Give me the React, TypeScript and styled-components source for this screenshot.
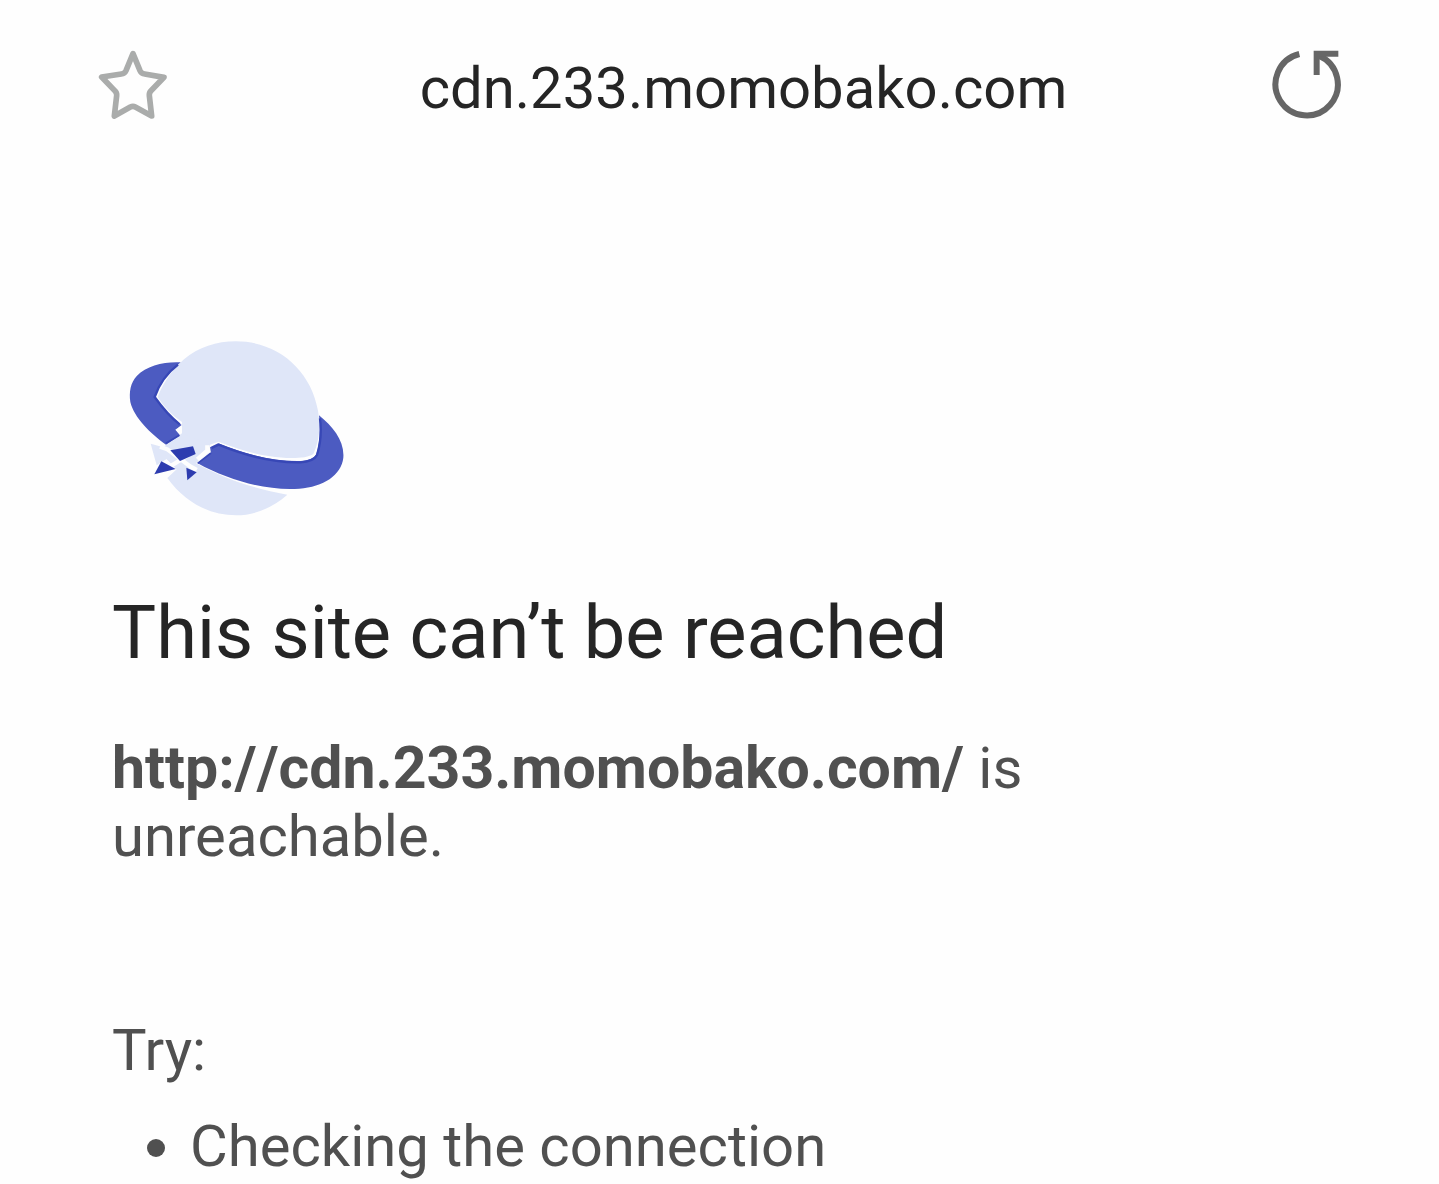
import React from "react";
import styled, { createGlobalStyle } from "styled-components";

const GlobalStyle = createGlobalStyle`
  * { box-sizing: border-box; }
  body {
    margin: 0;
    background: #fefefe;
    font-family: Roboto, "Liberation Sans", sans-serif;
  }
`;

const Toolbar = styled.header`
  display: flex;
  align-items: flex-end;
  padding: 48px 96px 0;
`;

const IconButton = styled.button`
  flex: none;
  width: 74px;
  height: 74px;
  padding: 0;
  border: 0;
  background: none;
  cursor: pointer;

  svg { display: block; }
`;

const Address = styled.div`
  flex: 1;
  min-width: 0;
  padding-left: 48px;
  text-align: center;
  font-size: 58px;
  line-height: 68px;
  color: #252525;
`;

const Content = styled.main`
  padding: 198px 112px 0;
  font-size: 58px;
  line-height: 68px;
  color: #505050;
`;

const Planet = styled.svg`
  display: block;
  width: 248px;
  height: 210px;
`;

const Heading = styled.h1`
  margin: 59px 0 57px;
  font-size: 74px;
  line-height: 88px;
  font-weight: 400;
  color: #252525;
`;

const Message = styled.p`
  max-width: 1000px;
  margin: 0;
`;

const Url = styled.strong`
  font-size: 59px;
  font-weight: 700;
  font-kerning: none;
`;

const Hint = styled.p`
  margin: 146px 0 28px;
`;

const Suggestions = styled.ul`
  margin: 0;
  padding-left: 78px;
`;

function StarIcon() {
  return (
    <svg width="74" height="74" viewBox="48 54 222 222" fill="none" aria-hidden="true">
      <path
        d="M159 71 L180 122 Q184 131 194 132 L252 142 L213 182 Q207 188 208 197 L215 258 L166 231 Q159 227 151 231 L103 258 L110 197 Q111 188 104 182 L65 141 L124 132 Q134 131 138 122 Z"
        stroke="#aaacab"
        strokeWidth="17"
        strokeLinejoin="round"
      />
    </svg>
  );
}

function ReloadIcon() {
  return (
    <svg width="74" height="74" viewBox="57 54 222 222" fill="none" stroke="#666" aria-hidden="true">
      <path d="M148 72 A93.500 93.500 0 1 0 207 77" strokeWidth="18" />
      <path d="M265 71 H200 V135" strokeWidth="18" />
    </svg>
  );
}

function PlanetIllustration() {
  return (
    <Planet viewBox="6 0 744 630" aria-hidden="true">
      <path
        d="M222 118 C265 81 320 64 378 64 C502 64 602 148 624 272 C632 320 628 365 610 402 C590 417 530 417 480 409 C430 402 380 385 325 365 L300 374 L294 399 L258 430 C340 475 430 506 532 524 C488 563 435 586 378 586 C300 586 225 548 172 474 L200 448 L170 417 L140 436 L122 371 L160 382 L216 346 L216 306 C185 285 160 258 143 231 C160 187 188 148 222 118 Z"
        fill="#dfe6f8"
      />
      <path d="M160 382 L216 340 L300 374 L280 400 L200 448 L170 417 Z" fill="#dfe6f8" />
      <path
        d="M212 127 C165 124 110 137 81 167 C61 188 57 216 61 246 C72 292 120 340 168 374 L210 346 L196 329 L215 315 C184 292 156 262 134 231 C151 190 175 158 212 127 Z"
        fill="#4c5bc1"
      />
      <path
        d="M204 134 C170 160 147 194 134 231 C156 262 180 290 209 313"
        fill="none"
        stroke="#3747b6"
        strokeWidth="7"
      />
      <path
        d="M627 286 C669 320 704 363 700 413 C694 466 640 500 568 506 C469 513 358 482 263 430 L303 399 L300 382 L324 370 C400 401 488 425 572 423 C593 422 613 415 619 403 C629 369 632 327 627 286 Z"
        fill="#4c5bc1"
      />
      <path
        d="M630 295 C635 335 631 374 621 405 C614 419 592 426 571 427 C486 429 404 406 326 374 L305 384"
        fill="none"
        stroke="#3747b6"
        strokeWidth="7"
      />
      <path
        d="M263 430 L303 399 M168 370 L208 346"
        stroke="#3747b6"
        strokeWidth="5"
      />
      <path
        d="M150 380 L172 388 L242 440 L260 450 M130 470 L236 405 M262 418 L292 392 L292 376"
        fill="none"
        stroke="#fefefe"
        strokeWidth="13"
      />
      <g fill="#2d3caf">
        <path d="M181 391 L249 379 L257 402 L210 423 Z" />
        <path d="M154 424 L197 447 L133 463 Z" />
        <path d="M229 443 L260 457 L232 481 Z" />
      </g>
    </Planet>
  );
}

export default function App() {
  return (
    <>
      <GlobalStyle />
      <Toolbar>
        <IconButton type="button" aria-label="Bookmark">
          <StarIcon />
        </IconButton>
        <Address>cdn.233.momobako.com</Address>
        <IconButton type="button" aria-label="Reload">
          <ReloadIcon />
        </IconButton>
      </Toolbar>
      <Content>
        <PlanetIllustration />
        <Heading>This site can’t be reached</Heading>
        <Message>
          <Url>http://cdn.233.momobako.com/</Url> is unreachable.
        </Message>
        <Hint>Try:</Hint>
        <Suggestions>
          <li>Checking the connection</li>
        </Suggestions>
      </Content>
    </>
  );
}
